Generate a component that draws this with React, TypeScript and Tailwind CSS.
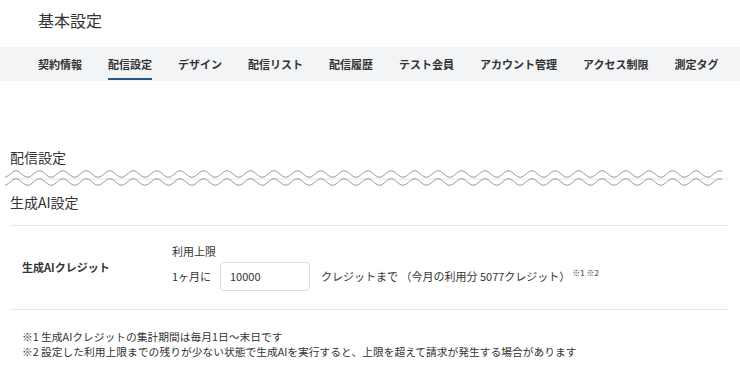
const tabs = ['契約情報', '配信設定', 'デザイン', '配信リスト', '配信履歴', 'テスト会員', 'アカウント管理', 'アクセス制限', '測定タグ']

function wavePath(cy: number) {
  const pts: string[] = []
  for (let x = 5; x <= 722; x += 0.5) {
    const y = cy - 3.2 * Math.cos((2 * Math.PI * (x - 16)) / 23.45)
    pts.push(`${x === 5 ? 'M' : 'L'}${x.toFixed(1)} ${y.toFixed(2)}`)
  }
  return pts.join(' ')
}

function TornDivider() {
  return (
    <svg width="740" height="22" viewBox="0 0 740 22" className="block -mx-[10px]">
      <line x1="10" x2="728" y1="12" y2="12" stroke="#e6e6e6" strokeWidth="1" />
      <path d={wavePath(7)} fill="none" stroke="#8a8a8a" strokeWidth="1" />
      <path d={wavePath(15)} fill="none" stroke="#8a8a8a" strokeWidth="1" />
    </svg>
  )
}

export default function App() {
  return (
    <div
      className="w-[740px] h-[372px] overflow-hidden bg-white text-[#333]"
      style={{ fontFamily: '"Noto Sans CJK JP", "Noto Sans", sans-serif' }}
    >
      <div className="h-[47px] pl-[38px] pt-[8px]">
        <h1 className="text-[16px] leading-[24px] text-[#333]">基本設定</h1>
      </div>

      <nav className="h-[34px] bg-[#f3f4f6] flex pl-[25px]">
        {tabs.map((t) => (
          <div key={t} className="px-[13px] h-full flex items-center">
            <span className="relative h-full flex items-center text-[11px] font-semibold text-[#333]">
              {t}
              {t === '配信設定' && (
                <span className="absolute left-0 right-0 bottom-[1px] h-[2px] bg-[#2b5688]" />
              )}
            </span>
          </div>
        ))}
      </nav>

      <div className="pl-[10px] pr-[12px]">
        <h2 className="mt-[66px] text-[14px] leading-[20px] text-[#333]">配信設定</h2>
        <TornDivider />
        <h2 className="mt-[3px] text-[14px] leading-[20px] text-[#333]">生成AI設定</h2>

        <div className="mt-[13px] border-t border-b border-[#e8e8e8] py-[18px] flex items-center">
          <div className="w-[162px] pl-[12px] text-[11px] font-bold">生成AIクレジット</div>
          <div className="flex flex-col">
            <div className="text-[11px] leading-[15px]">利用上限</div>
            <div className="mt-[3px] flex items-center text-[11px]">
              <span className="w-[48px]">1ヶ月に</span>
              <div className="w-[90px] h-[29px] border border-[#dcdcdc] rounded-[4px] pl-[9px] flex items-center text-[11px]">
                10000
              </div>
              <span className="ml-[11px]">クレジットまで （今月の利用分 5077クレジット）</span>
              <sup className="ml-[2px] text-[8px] -top-[4px]">※1 ※2</sup>
            </div>
          </div>
        </div>

        <div className="mt-[19px] pl-[12px] text-[10.75px] leading-[15px]">
          <p>※1 生成AIクレジットの集計期間は毎月1日〜末日です</p>
          <p>※2 設定した利用上限までの残りが少ない状態で生成AIを実行すると、上限を超えて請求が発生する場合があります</p>
        </div>
      </div>
    </div>
  )
}
